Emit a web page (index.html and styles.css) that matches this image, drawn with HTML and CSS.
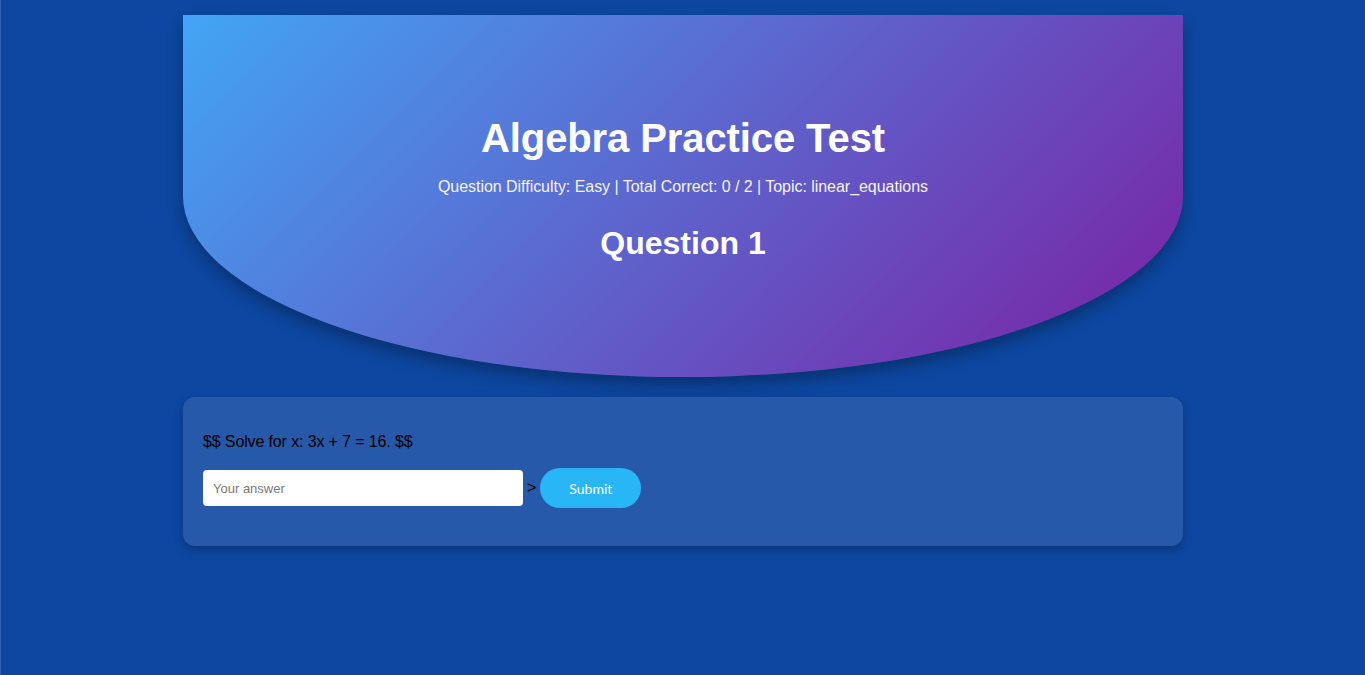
FILE: index.html
```html
<!DOCTYPE html>
<html lang="en">
<head>
<meta charset="utf-8">
<title>Algebra Practice Test</title>
<link rel="stylesheet" href="styles.css">
</head>
<body>
<div class="page">
  <header class="hero">
    <h1 class="hero-title">Algebra Practice Test</h1>
    <p class="hero-meta">Question Difficulty: Easy | Total Correct: 0 / 2 | Topic: linear_equations</p>
    <h2 class="hero-question">Question 1</h2>
  </header>
  <section class="card">
    <p class="question-text">$$ Solve for x: 3x + 7 = 16. $$</p>
    <form class="answer-row">
      <input class="answer-input" type="text" placeholder="Your answer">
      <span class="stray">&gt;</span>
      <button class="submit-btn" type="button">Submit</button>
    </form>
  </section>
</div>
</body>
</html>
```

FILE: styles.css
```css
html, body {
  margin: 0;
  padding: 0;
  height: 100%;
}
body {
  background: #0d47a1;
  font-family: "Liberation Sans", Arial, sans-serif;
  border-left: 1px solid #3063ad;
  box-sizing: border-box;
}
.page {
  width: 1000px;
  margin: 0 auto;
  padding-top: 15px;
}
.hero {
  height: 362px;
  box-sizing: border-box;
  padding-top: 100px;
  background: linear-gradient(135deg, #42a5f5 0%, #7b1fa2 100%);
  border-radius: 0 0 50% 50%;
  box-shadow: 0 8px 16px rgba(0, 0, 0, 0.3);
  color: #fff;
  text-align: center;
}
.hero-title {
  margin: 0;
  font-size: 40px;
  line-height: 46px;
  font-weight: 700;
  letter-spacing: -0.1px;
}
.hero-meta {
  margin: 17px 0 0;
  font-size: 16px;
  line-height: 18px;
  letter-spacing: -0.04px;
  color: #f3f3f8;
}
.hero-question {
  margin: 29px 0 0;
  font-size: 32px;
  line-height: 37px;
  font-weight: 700;
}
.card {
  margin-top: 20px;
  background: #2759ab;
  border-radius: 12px;
  box-shadow: 0 4px 10px rgba(0, 0, 0, 0.25);
  padding: 36px 20px 38px;
}
.question-text {
  margin: 0;
  font-size: 16px;
  line-height: 18px;
  letter-spacing: -0.13px;
  color: #000;
}
.answer-row {
  display: flex;
  align-items: center;
  margin-top: 17px;
  height: 40px;
}
.answer-input {
  width: 320px;
  height: 36px;
  box-sizing: border-box;
  border: none;
  border-radius: 4px;
  padding: 0 10px;
  font-family: "Liberation Sans", Arial, sans-serif;
  font-size: 13px;
  background: #fff;
  outline: none;
}
.answer-input::placeholder {
  color: #777;
}
.stray {
  margin: 0 4px;
  font-size: 16px;
  color: #000;
}
.submit-btn {
  width: 101px;
  height: 40px;
  border: none;
  border-radius: 20px;
  background: #29b6f6;
  color: #fff;
  font-family: Lato, "Open Sans", sans-serif;
  font-size: 14px;
  cursor: pointer;
}
```
